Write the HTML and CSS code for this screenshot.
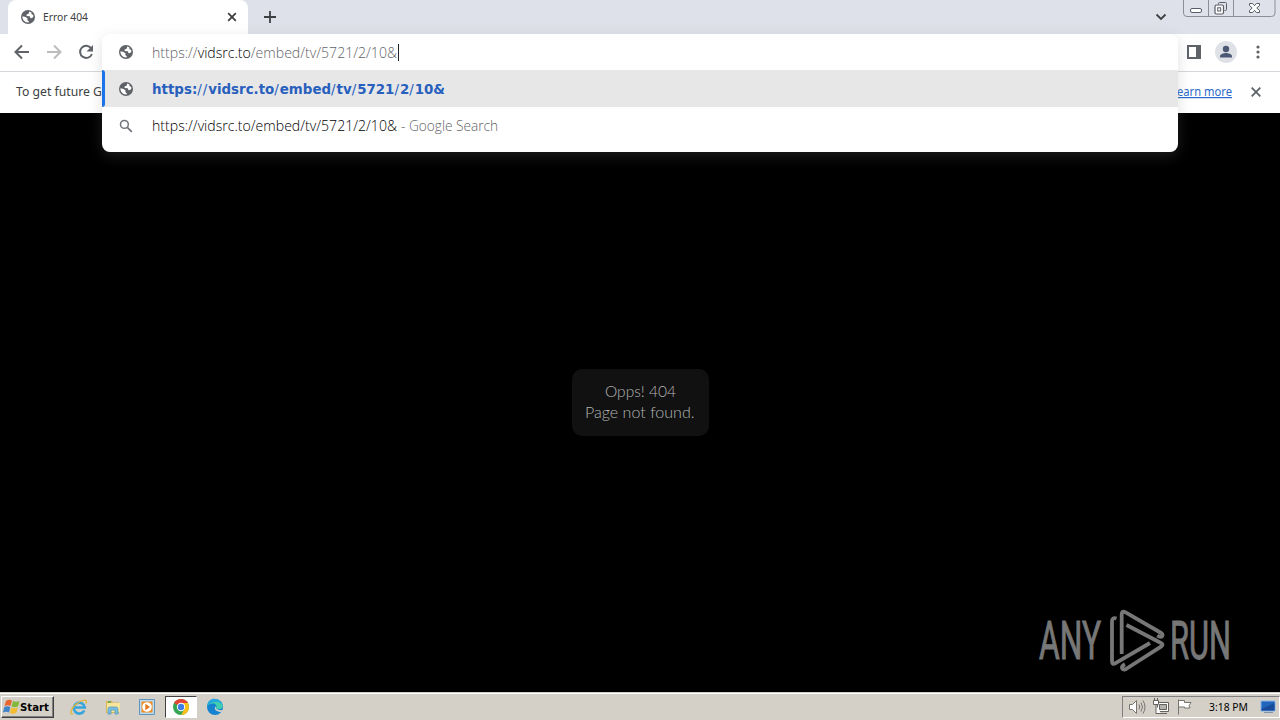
FILE: index.html
```html
<!DOCTYPE html>
<html lang="en">
<head>
    <meta charset="UTF-8">
    <meta name="viewport" content="width=device-width, initial-scale=1.0">
    <title>Error 404</title>
    <link rel="stylesheet" href="styles.css">
</head>

<body>
    <svg class="defs">
        <symbol id="globe" viewBox="0 0 14 14">
            <circle cx="7" cy="7" r="7" fill="#5f6368"/>
            <path d="M8.2 1.5 7.8 3.6 5.7 4.4 5.5 6 8.7 6.2 9.6 8.2 11.2 8.1 12.4 6.4 12.2 4.9 10.4 4.1 10.5 2.4z" fill="#fff"/>
            <path d="M1.5 6.3 4.6 7.1 6.6 8.5 6.3 10.1 7.8 11.2 7.6 12.5C3.8 12.9 1.1 9.6 1.5 6.3z" fill="#fff"/>
        </symbol>
    </svg>

    <div class="tabstrip">
        <div class="tab">
            <svg class="favicon" width="14" height="14"><use href="#globe"/></svg>
            <svg class="tab-title" width="56" height="18"><text x="0" y="13" textLength="45" lengthAdjust="spacingAndGlyphs">Error 404</text></svg>
            <svg class="tab-close" width="10" height="10" viewBox="0 0 10 10"><path d="M1.2 1.2 8.8 8.8M8.8 1.2 1.2 8.8"/></svg>
        </div>
        <svg class="new-tab" width="12" height="12" viewBox="0 0 12 12"><path d="M6 0v12M0 6h12"/></svg>
        <svg class="tab-search" width="12" height="8" viewBox="0 0 12 8"><path d="M1.500 1.500 6 6l4.500-4.500"/></svg>
        <svg class="win-controls" width="94" height="18" viewBox="0 0 94 18">
            <path d="M.5 0v13q0 3.500 3.500 3.500H88.500q3.500 0 3.500-3.500V0M25.500 0v16M50.500 0v16" stroke="#8b8e96"/>
            <rect x="7.500" y="8.500" width="11" height="4" rx="1.500" fill="#fff" stroke="#595d67"/>
            <path d="M35.500 4.500v-1q0-1 1-1h6q1 0 1 1v6q0 1-1 1h-1" stroke="#595d67"/>
            <rect x="32" y="5" width="8.500" height="9" rx="1.500" fill="#fff" stroke="#595d67" stroke-width="1.200"/>
            <rect x="34.700" y="7.800" width="3" height="3.200" stroke="#595d67"/>
            <path d="M66.500 3.500h3l2 2.200 2-2.200h3v2l-2.700 2.500 2.700 2.500v2h-3l-2-2.200-2 2.200h-3v-2l2.700-2.500-2.700-2.500z" fill="#fff" stroke="#595d67"/>
        </svg>
    </div>

    <div class="toolbar">
        <svg class="nav" width="16" height="16" viewBox="0 0 16 16"><path d="M15 8H2M8 1.500 1.500 8 8 14.500"/></svg>
        <svg class="nav forward" width="16" height="16" viewBox="0 0 16 16"><path d="M1 8h13M8 1.500 14.500 8 8 14.500"/></svg>
        <svg class="nav" width="16" height="16" viewBox="0 0 16 16"><path d="M13.200 4.300A6.100 6.100 0 1 0 13.900 10"/><path d="M15 1v6.500H8.500z" fill="#5f6368" stroke="none"/></svg>
        <div class="toolbar-right">
            <svg width="14" height="14" viewBox="0 0 14 14"><path d="M1 1h12v12H1z" fill="#fff" stroke="#5f6368" stroke-width="2"/><path d="M9 1h4v12H9z" fill="#5f6368"/></svg>
            <svg width="22" height="22" viewBox="0 0 22 22"><circle cx="11" cy="11" r="11" fill="#dee1e6"/><circle cx="11" cy="8" r="3.200" fill="#4c5974"/><path d="M5 16.500v-1.300c0-2.200 4-3.300 6-3.300s6 1.100 6 3.300v1.300z" fill="#4c5974"/></svg>
            <svg width="4" height="14" viewBox="0 0 4 14" fill="#5f6368"><circle cx="2" cy="2" r="1.600"/><circle cx="2" cy="7" r="1.600"/><circle cx="2" cy="12" r="1.600"/></svg>
        </div>
    </div>

    <div class="infobar">
        <svg class="info-text" width="88" height="20"><text x="0" y="14" textLength="86" lengthAdjust="spacingAndGlyphs">To get future G</text></svg>
        <a class="learn"><svg width="60" height="20"><text x="0" y="14" textLength="55" lengthAdjust="spacingAndGlyphs">earn more</text></svg></a>
        <svg class="info-close" width="10" height="10" viewBox="0 0 10 10"><path d="M.7.7 9.300 9.300M9.300.7.7 9.300"/></svg>
    </div>

    <main>
        <div class="message">
            <svg width="112" height="42">
                <text x="21" y="15.500" textLength="71" lengthAdjust="spacingAndGlyphs">Opps! 404</text>
                <text x="1" y="36.500" textLength="109.500" lengthAdjust="spacingAndGlyphs">Page not found.</text>
            </svg>
        </div>
        <svg class="watermark" width="204" height="64" viewBox="0 0 204 64">
            <text x="0" y="50" textLength="62" lengthAdjust="spacingAndGlyphs">ANY</text>
            <text x="131" y="50" textLength="61" lengthAdjust="spacingAndGlyphs">RUN</text>
            <g fill="none" stroke="#777" stroke-width="3.800" stroke-linejoin="round">
                <path d="M82.700 45V5.500q0-4 3.500-2.300l36 20.800q2 1.500 1 3-1.300 1.700-5-.3"/>
                <path d="M77.500 9.500q-4.500-1.500-4.500 3V52q0 4 3.500 2.200L111 34"/>
                <path d="M87.500 16 122 34q3 1.700 0 3.700L87 60q-3 1.500-4-1-.4-2 3-3.700"/>
            </g>
        </svg>
    </main>

    <div class="taskbar">
        <div class="start">
            <svg width="17" height="16" viewBox="0 0 17 16">
                <path d="M3 2q3-2 6-.5L7.500 7q-3-1.500-6 0z" fill="#e8652d"/>
                <path d="M10 2q3 1.500 6.500 0L15 7.500q-3.500 1.500-6.500 0z" fill="#83b83a"/>
                <path d="M1.300 8q3-1.500 6 0L6 13.500q-3-1.500-6 0z" fill="#3f83c8"/>
                <path d="M8.300 8.500q3 1.500 6.500 0l-1.500 5.500q-3.500 1.500-6.500 0z" fill="#f4bc31"/>
            </svg>
            <svg width="31" height="16"><text x="0" y="12" textLength="29" lengthAdjust="spacingAndGlyphs">Start</text></svg>
        </div>
        <div class="quick">
            <svg width="18" height="18" viewBox="0 0 18 18">
                <path d="M14.300 12.500A5.500 5.500 0 1 1 14.800 9.500H5" fill="none" stroke="#36a5dc" stroke-width="2.600"/>
                <path d="M3 15.500C-1 18 .5 10 7 5.500S18 1 16 5.500" fill="none" stroke="#e3b63d" stroke-width="1.300"/>
            </svg>
        </div>
        <div class="quick">
            <svg width="18" height="18" viewBox="0 0 18 18">
                <path d="M2 3h6l1 1.500h6V15H2z" fill="#d8b755"/>
                <path d="M3 5h13v9H3z" fill="#f8e59c"/>
                <path d="M4 4h3" stroke="#5aa858" stroke-width="1.500"/>
                <path d="M4 16v-5q0-2 2-2h6q2 0 2 2v5h-3v-4H7v4z" fill="#79bedf" stroke="#4f96bc" stroke-width=".7"/>
            </svg>
        </div>
        <div class="quick">
            <svg width="18" height="18" viewBox="0 0 18 18">
                <path d="M1.500 1.500h15v15h-15z" fill="#b9dcf2" stroke="#5d93bd"/>
                <path d="M3.500 3.500h11v11h-11z" fill="#f18a20"/><circle cx="9" cy="9" r="4.800" fill="#fff"/><path d="m7.300 5.700 4.700 3.300-4.700 3.300z" fill="#e8761a"/>
            </svg>
        </div>
        <div class="quick active">
            <svg width="18" height="18" viewBox="0 0 18 18">
                <circle cx="9" cy="9" r="8" fill="#35a455"/>
                <path d="M9 9 2.100 5A8 8 0 0 1 15.900 5z" fill="#e54435"/>
                <path d="M9 5h6.900A8 8 0 0 1 9 17l3.500-6z" fill="#fbc116"/>
                <circle cx="9" cy="9" r="4.200" fill="#fff"/><circle cx="9" cy="9" r="3.200" fill="#3f7ee8"/>
            </svg>
        </div>
        <div class="quick">
            <svg width="18" height="18" viewBox="0 0 18 18">
                <circle cx="9" cy="9" r="8" fill="#1583cf"/>
                <path d="M1.300 8C2 2 7-.5 12 1.800c5 2.400 6.500 8 2.500 9.200-3 .7-5 0-4.300-1.500C12 6 6 3.500 1.300 8z" fill="#42cfae"/>
                <path d="M1.300 7.500C2 2 7-.5 11.500 1.500 15 3 16 5 16.500 7 12 1.500 6 4 1.300 7.500z" fill="#24a8df"/>
                <path d="M9.500 8q-3 5 5.500 6.200l2-2.200q-5 1-7-1.500z" fill="#d8d4cc"/>
            </svg>
        </div>
        <div class="tray">
            <svg width="18" height="18" viewBox="0 0 18 18" fill="none" stroke="#77756f">
                <path d="M1.500 6.500h3l4-4v13l-4-4h-3z" fill="#fff"/><path d="M11 6.500q1.500 2.500 0 5M13 4.500q3 4.500 0 9M15 2.500q4 6.500 0 13"/>
            </svg>
            <svg width="18" height="18" viewBox="0 0 18 18" fill="none" stroke="#65635e">
                <path d="M5.500 4.500h11v9h-11z" fill="#fff"/><path d="M7.500 6.500h7v5h-7z" fill="#b5b3ad"/><path d="M8 15.500h7"/><path d="M1.500 2.500h5v4h-5zM2.500 0v2M5.500 0v2M4 7v8.500h5" fill="#fff"/>
            </svg>
            <svg width="18" height="18" viewBox="0 0 18 18" fill="none" stroke="#77756f">
                <path d="M2.500 1.500v15M2.500 2.500h6v2h6.500l-2 3 1 2.500H8.500v-1h-6" fill="#fff"/>
            </svg>
            <svg class="clock" width="41" height="16"><text x="0" y="12" textLength="39" lengthAdjust="spacingAndGlyphs">3:18 PM</text></svg>
            <svg class="desktop" width="16" height="14" viewBox="0 0 16 14"><path d="M1 1h14v10H1z" fill="#2265bc" stroke="#87b6e9"/><path d="M1.500 9 14.500 3v7.500h-13z" fill="#194b9b"/><path d="M4 12.500h9" stroke="#8395a8"/></svg>
        </div>
    </div>

    <div class="omnibox">
        <div class="row">
            <svg class="row-icon" width="14" height="14"><use href="#globe"/></svg>
            <svg class="row-text" width="400" height="24"><text x="0" y="17.500" textLength="245" lengthAdjust="spacingAndGlyphs" fill="#5f6368">https://<tspan fill="#000">vidsrc.to</tspan>/embed/tv/5721/2/10&amp;</text></svg>
            <div class="caret"></div>
        </div>
        <div class="row selected">
            <svg class="row-icon" width="14" height="14"><use href="#globe"/></svg>
            <svg class="row-text" width="400" height="24"><text x="0" y="17" textLength="293" lengthAdjust="spacingAndGlyphs">https:<tspan class="slash">//</tspan>vidsrc.to<tspan class="slash">/</tspan>embed<tspan class="slash">/</tspan>tv<tspan class="slash">/</tspan>5721<tspan class="slash">/</tspan>2<tspan class="slash">/</tspan>10&amp;</text></svg>
        </div>
        <div class="row">
            <svg class="row-icon" width="14" height="14" viewBox="0 0 14 14"><circle cx="5.400" cy="5.400" r="3.900" fill="none" stroke="#70757a" stroke-width="1.500"/><path d="m8.300 8.300 4.500 4.500" stroke="#70757a" stroke-width="1.800"/></svg>
            <svg class="row-text" width="400" height="24">
                <text x="0" y="17" textLength="245" lengthAdjust="spacingAndGlyphs" fill="#000">https://vidsrc.to/embed/tv/5721/2/10&amp;</text>
                <text x="249" y="17" textLength="97" lengthAdjust="spacingAndGlyphs" fill="#5f6368">- Google Search</text>
            </svg>
        </div>
    </div>
</body>

</html>
```
FILE: styles.css
```css
* {
    padding: 0;
    margin: 0;
    box-sizing: border-box;
}
body {
    width: 1280px;
    height: 720px;
    position: relative;
    display: flex;
    flex-direction: column;
    overflow: hidden;
    background-color: #000;
    font-family: "Noto Sans", "DejaVu Sans", sans-serif;
}
svg {
    display: block;
    flex: none;
    overflow: visible;
}
.defs {
    position: absolute;
    width: 0;
    height: 0;
}
.tabstrip {
    height: 34px;
    display: flex;
    align-items: center;
    padding-left: 8px;
    background-color: #dee1e9;
}
.tab {
    width: 240px;
    height: 34px;
    display: flex;
    align-items: center;
    padding: 0 11px 0 13px;
    border-radius: 8px 8px 0 0;
    background-color: #fff;
}
.tab-title {
    margin-left: 8px;
    font-size: 11px;
    fill: #3c4043;
}
.tab-close {
    margin-left: auto;
}
.tab-close path,
.new-tab path,
.tab-search path {
    fill: none;
    stroke: #3c4043;
    stroke-width: 1.8;
}
.new-tab {
    margin-left: 16px;
}
.tab-search {
    margin-left: auto;
}
.win-controls {
    align-self: flex-start;
    margin: 0 3px 0 16px;
    fill: none;
}
.toolbar {
    height: 38px;
    display: flex;
    align-items: center;
    gap: 16px;
    padding: 0 20px 1px 14px;
    border-bottom: 1px solid #d5d7dc;
    background-color: #fff;
}
.nav {
    fill: none;
    stroke: #5f6368;
    stroke-width: 2;
}
.forward {
    stroke: #babcbe;
}
.toolbar-right {
    display: flex;
    align-items: center;
    gap: 14px;
    margin-left: auto;
}
.toolbar-right svg:last-child {
    margin-left: 5px;
}
.infobar {
    height: 41px;
    display: flex;
    align-items: center;
    padding: 0 19px 1px 16px;
    background-color: #fff;
    font-size: 12px;
}
.info-text {
    fill: #3c4043;
}
.learn {
    margin-left: auto;
    fill: #2869c9;
}
.learn text {
    text-decoration: underline;
}
.info-close {
    margin-left: 14px;
    stroke: #5f6368;
    stroke-width: 1.8;
}
main {
    flex: 1;
    display: flex;
    justify-content: center;
    align-items: center;
    position: relative;
}
.message {
    width: 137px;
    height: 67px;
    padding: 12px;
    border-radius: 10px;
    background-color: #111;
    font-family: Lato, sans-serif;
    font-size: 15px;
    font-weight: 300;
    fill: #b4b4b4;
}
.watermark {
    position: absolute;
    left: 1039px;
    bottom: 19px;
    font-family: Roboto, sans-serif;
    font-size: 53px;
    fill: #777;
}
.watermark text {
    stroke: #777;
    stroke-width: 1;
}
.taskbar {
    height: 28px;
    display: flex;
    align-items: center;
    border-top: 1px solid #d4d0c8;
    box-shadow: inset 0 1px #fff;
    padding: 0 0 0 1px;
    background-color: #d4d0c8;
}
.start {
    width: 53px;
    height: 22px;
    display: flex;
    align-items: center;
    padding-left: 1px;
    border: 1px solid;
    border-color: #fff #404040 #404040 #fff;
    box-shadow: inset -1px -1px #808080;
    font-family: "DejaVu Sans", sans-serif;
    font-size: 11px;
    font-weight: bold;
    margin-right: 9px;
}
.quick {
    width: 32px;
    height: 22px;
    display: flex;
    justify-content: center;
    align-items: center;
    margin-right: 2px;
}
.quick.active {
    border: 1px solid;
    border-color: #404040 #fff #fff #404040;
    background-color: #fff;
}
.tray {
    width: 158px;
    height: 22px;
    display: flex;
    align-items: center;
    gap: 6px;
    padding-left: 5px;
    margin-left: auto;
    border: 1px solid;
    border-color: #808080 #fff #fff #808080;
    font-size: 11px;
}
.clock {
    margin-left: 9px;
}
.desktop {
    margin-left: 4px;
}
.omnibox {
    position: absolute;
    top: 34px;
    left: 102px;
    width: 1076px;
    height: 118px;
    border-radius: 8px;
    overflow: hidden;
    background-color: #fff;
    box-shadow: 0 4px 14px rgba(128, 128, 128, .24);
    font-size: 14px;
}
.row {
    position: relative;
    height: 37px;
    display: flex;
    align-items: center;
    padding-left: 17px;
}
.row:first-child {
    height: 36px;
}
.row-text {
    margin-left: 19px;
}
.row:not(.selected) .row-text {
    font-family: "Open Sans", sans-serif;
    font-weight: 300;
}
.selected {
    background-color: #e7e7e8;
    font-family: "DejaVu Sans", sans-serif;
    font-weight: bold;
    fill: #2860bd;
}
.slash {
    font-weight: normal;
    letter-spacing: 1px;
}
.selected::before {
    content: "";
    position: absolute;
    left: 0;
    width: 3px;
    height: 37px;
    border-radius: 0 3px 3px 0;
    background-color: #1a73e8;
}
.caret {
    position: absolute;
    left: 296px;
    width: 1px;
    height: 17px;
    background-color: #202124;
}
```
